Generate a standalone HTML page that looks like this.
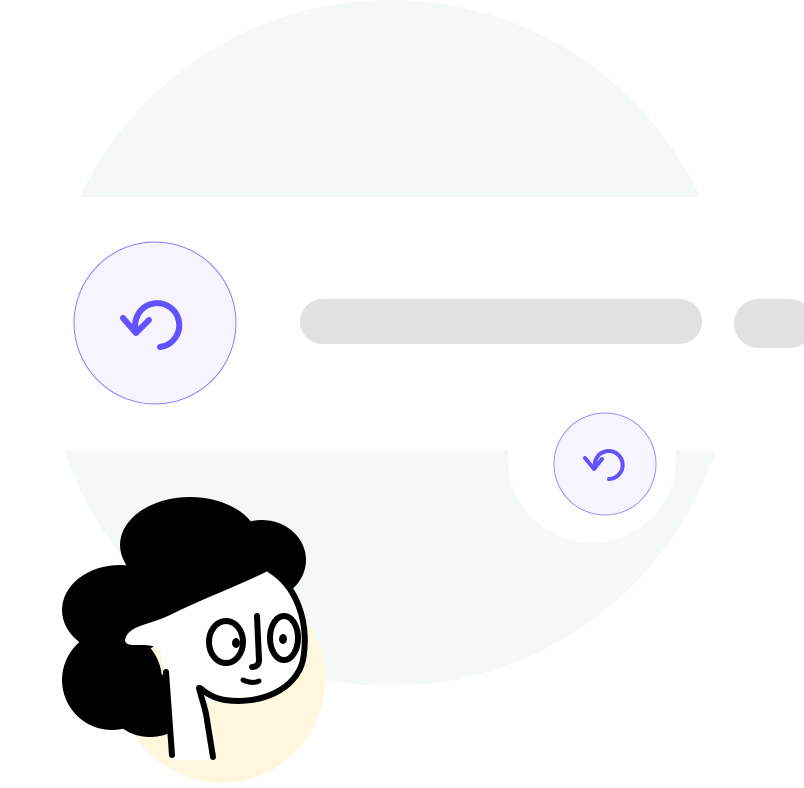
<!DOCTYPE html>
<html><head><style>html,body{margin:0;padding:0;background:#fff;width:804px;height:788px;overflow:hidden}</style></head>
<body>
<svg width="804" height="788" viewBox="0 0 804 788" xmlns="http://www.w3.org/2000/svg" style="display:block">
<circle cx="390" cy="343" r="343" fill="#f4f9f7"/>
<rect x="0" y="197" width="804" height="253" fill="#fff"/>
<circle cx="592" cy="459" r="84" fill="#fff"/>
<rect x="300" y="299" width="402" height="45" rx="22.5" fill="#e1e1e1"/>
<rect x="734" y="299" width="80" height="49" rx="24.5" fill="#e1e1e1"/>
<circle cx="155" cy="323" r="81" fill="#f6f5ff" stroke="#8a7bff" stroke-width="1"/>
<g fill="none" stroke="#6352ff" stroke-width="6" stroke-linecap="round" stroke-linejoin="round">
<path d="M136,331 A22,22 0 1 1 160,347"/>
<path d="M123,318 L136,333 L149,320"/>
</g>
<circle cx="605" cy="464" r="51" fill="#f6f5ff" stroke="#9a8dff" stroke-width="1"/>
<g fill="none" stroke="#6352ff" stroke-width="4" stroke-linecap="round" stroke-linejoin="round">
<path d="M595,468 A14,14 0 1 1 609,479"/>
<path d="M585,458 L594,469 L602,459"/>
</g>
<!-- character -->
<circle cx="222" cy="680" r="103" fill="#fff7dd"/>
<!-- hair back -->
<g fill="#000">
<ellipse cx="190" cy="545" rx="70" ry="48"/>
<ellipse cx="262" cy="560" rx="44" ry="40"/>
<ellipse cx="120" cy="610" rx="58" ry="45"/>
<ellipse cx="112" cy="680" rx="50" ry="50"/>
<ellipse cx="150" cy="705" rx="40" ry="32"/>
<ellipse cx="180" cy="600" rx="60" ry="40"/>
</g>
<!-- face -->
<path d="M160,650 C150,640 125,650 125,640 C128,625 150,625 170,615 C200,600 240,585 270,570 C295,585 310,620 303,660 C296,690 260,710 215,700 L205,705 L210,760 L172,760 L168,690 Z" fill="#fff"/>
<path d="M270,570 C295,585 310,620 303,660 C296,690 260,705 225,700 C212,698 205,692 200,688" fill="none" stroke="#000" stroke-width="6" stroke-linecap="round"/>
<path d="M166,672 L172,755" stroke="#000" stroke-width="6" stroke-linecap="round"/>
<path d="M207,720 L213,757" stroke="#000" stroke-width="6" stroke-linecap="round"/>
<path d="M199,688 C202,700 206,710 207,720" fill="none" stroke="#000" stroke-width="6" stroke-linecap="round"/>
<ellipse cx="226" cy="642" rx="17" ry="21" fill="#fff" stroke="#000" stroke-width="6"/>
<ellipse cx="284" cy="638" rx="14" ry="22" fill="#fff" stroke="#000" stroke-width="6"/>
<ellipse cx="236" cy="643" rx="4" ry="5" fill="#000"/>
<ellipse cx="283" cy="639" rx="4" ry="5" fill="#000"/>
<path d="M257,616 L259,660 C259,665 256,667 252,667" fill="none" stroke="#000" stroke-width="6" stroke-linecap="round"/>
<path d="M243,680 C249,683 255,683 259,681" fill="none" stroke="#000" stroke-width="5" stroke-linecap="round"/>
</svg>
</body></html>
